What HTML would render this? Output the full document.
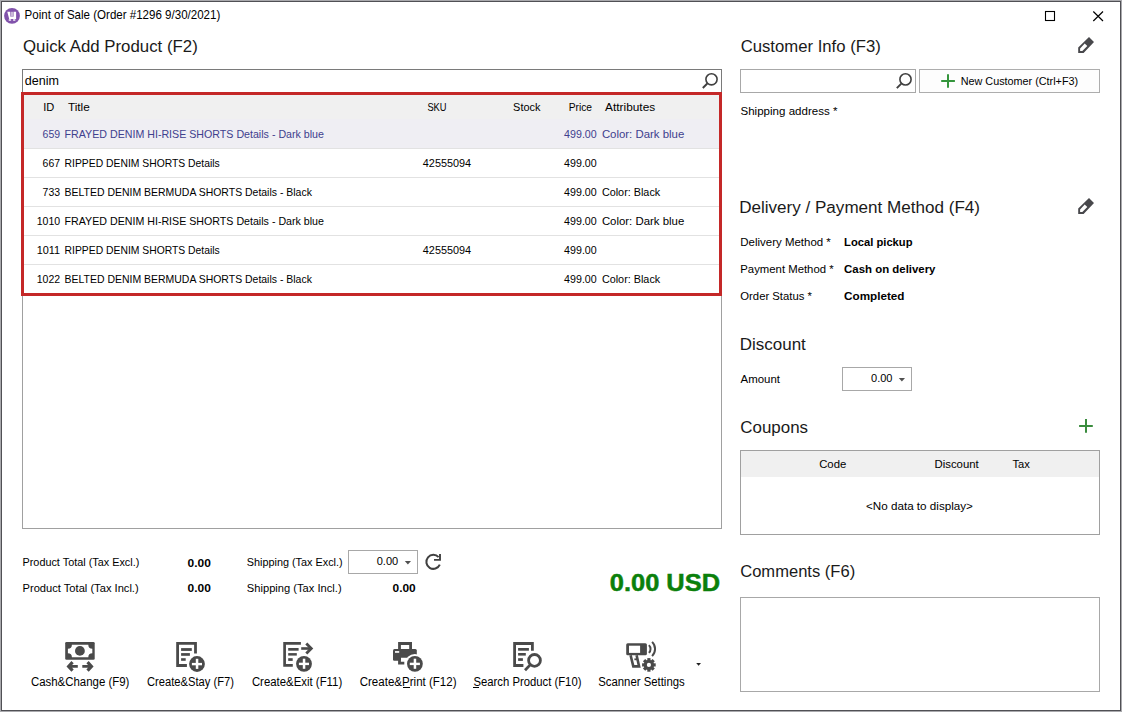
<!DOCTYPE html>
<html><head><meta charset="utf-8"><style>
html,body{margin:0;padding:0;width:1122px;height:712px;overflow:hidden;background:#fff;}
svg text{font-family:"Liberation Sans",sans-serif;white-space:pre;}
.b{position:absolute;box-sizing:border-box;}
</style></head><body>
<div class="b" style="left:0;top:0;width:1122px;height:712px;border:1px solid #a9a9ad"></div>
<div class="b" style="left:1px;top:1px;width:1120px;height:710px;border:1px solid #505055"></div>
<!-- main grid frame -->
<div class="b" style="left:22px;top:92px;width:700px;height:437px;border:1px solid #a0a0a0"></div>
<div class="b" style="left:23px;top:93px;width:698px;height:26px;background:#f0f0f0"></div>
<div class="b" style="left:23px;top:119px;width:698px;height:29px;background:#efeef3"></div>
<div class="b" style="left:23px;top:148px;width:698px;height:1px;background:#e2e2e2"></div>
<div class="b" style="left:23px;top:177px;width:698px;height:1px;background:#e2e2e2"></div>
<div class="b" style="left:23px;top:206px;width:698px;height:1px;background:#e2e2e2"></div>
<div class="b" style="left:23px;top:235px;width:698px;height:1px;background:#e2e2e2"></div>
<div class="b" style="left:23px;top:264px;width:698px;height:1px;background:#e2e2e2"></div>
<!-- search box -->
<div class="b" style="left:22px;top:69px;width:700px;height:24px;border:1px solid #7a7a7a;border-bottom:none"></div>
<!-- red highlight -->
<div class="b" style="left:21px;top:92px;width:701px;height:204px;border:3px solid #c42828"></div>
<!-- customer search -->
<div class="b" style="left:740px;top:69px;width:176px;height:24px;border:1px solid #a8a8a8"></div>
<div class="b" style="left:919px;top:69px;width:181px;height:24px;border:1px solid #adadad;background:#fdfdfd"></div>
<!-- discount spin -->
<div class="b" style="left:842px;top:367px;width:70px;height:24px;border:1px solid #a8a8a8"></div>
<!-- coupons grid -->
<div class="b" style="left:740px;top:450px;width:360px;height:85px;border:1px solid #a0a0a0"></div>
<div class="b" style="left:741px;top:451px;width:358px;height:26px;background:#f0f0f0"></div>
<!-- comments -->
<div class="b" style="left:740px;top:597px;width:360px;height:95px;border:1px solid #a8a8a8"></div>
<!-- shipping spin -->
<div class="b" style="left:348px;top:550px;width:70px;height:24px;border:1px solid #a8a8a8"></div>
<div class="b" style="left:473px;top:687px;width:6px;height:1px;background:#000"></div>
<div class="b" style="left:403px;top:687px;width:7px;height:1px;background:#000"></div>

<svg width="1122" height="712" viewBox="0 0 1122 712" style="position:absolute;left:0;top:0">
<!-- app icon -->
<circle cx="12" cy="15.9" r="7.9" fill="#8152ab"/>
<path d="M7.3 11.8 H9.9 L10.3 16.6 H13.6 V11.8 H16.1 V19 H9.2 Z" fill="#fff"/>
<rect x="10.4" y="11.8" width="3.1" height="4.6" fill="#c8b8d8"/>
<ellipse cx="9.9" cy="20" rx="1.4" ry="0.9" fill="#e6daf0"/>
<ellipse cx="14.2" cy="20" rx="1.4" ry="0.9" fill="#e6daf0"/>
<!-- window buttons -->
<rect x="1045.5" y="11.5" width="9" height="9" fill="none" stroke="#000" stroke-width="1.1"/>
<path d="M1093.3 11.5 L1103 21 M1103 11.5 L1093.3 21" stroke="#000" stroke-width="1.2"/>
<!-- search magnifiers -->
<g fill="none" stroke="#404040">
<circle cx="711.5" cy="79.3" r="5.6" stroke-width="1.6"/>
<path d="M707.3 83.5 L702.8 88" stroke-width="1.9"/>
<circle cx="905.5" cy="79.4" r="5.6" stroke-width="1.6"/>
<path d="M901.3 83.6 L896.8 88.1" stroke-width="1.9"/>
</g>
<!-- green plus -->
<path d="M941.2 81 H954.9 M948 74.3 V87.7" stroke="#34953c" stroke-width="2"/>
<path d="M1079.1 426 H1092.8 M1086 419.1 V432.8" stroke="#3a8c3e" stroke-width="2"/>
<!-- pencils -->
<g id="pen" fill="#48484c">
<path d="M1078.2 53 V47.4 L1089 36.9 L1094 42 L1083.6 53 Z M1080.1 51 H1082.3 L1087.3 46 L1084.7 43.6 L1080.1 48.5 Z" fill-rule="evenodd"/>
</g>
<use href="#pen" transform="translate(0,161)"/>
<!-- spin triangles -->
<path d="M898.8 378 H905 L901.9 381.6 Z" fill="#505050"/>
<path d="M404.8 561 H411 L407.9 564.6 Z" fill="#505050"/>
<!-- refresh -->
<path d="M438.6 557.2 A7 7 0 1 0 439.8 564.6" fill="none" stroke="#404040" stroke-width="2"/>
<path d="M434 559.9 H440 V554" fill="none" stroke="#404040" stroke-width="1.9"/>
<!-- dropdown -->
<path d="M696.2 663 H701 L698.6 665.7 Z" fill="#202020"/>
<g fill="#4a4a4a" stroke="none">
<!-- cash -->
<rect x="65.2" y="641.9" width="29.5" height="17.8" rx="1.3"/>
<path d="M71.9 644.7 H88.3 A4 4 0 0 0 92.3 648.7 V653.3 A4 4 0 0 0 88.3 657.3 H71.9 A4 4 0 0 0 67.9 653.3 V648.7 A4 4 0 0 0 71.9 644.7 Z" fill="#fff"/>
<circle cx="79.9" cy="650.9" r="4.9"/>
<path id="arrL" d="M66.5 666.4 L71.4 661.1 L73.7 663.3 L72.1 665 H77.8 V667.7 H72.1 L73.7 669.6 L71.4 671.8 Z"/>
<use href="#arrL" transform="translate(160.1 0) scale(-1 1)"/>
</g>
<g fill="#4a4a4a">
<!-- create&stay -->
<path d="M195.5 653.4 V643.3 H177.6 V665.5 H186.9" fill="none" stroke="#4a4a4a" stroke-width="2.8"/>
<rect x="181.1" y="648.1" width="10.7" height="2.8"/>
<rect x="181.1" y="653.1" width="8.8" height="2.7"/>
<rect x="181.1" y="658.2" width="4.6" height="2.6"/>
<circle cx="197" cy="664" r="9.6" fill="#fff"/>
<circle cx="197" cy="664" r="7.9"/>
<rect x="191.9" y="662.9" width="10.1" height="2.4" fill="#fff"/>
<rect x="195.8" y="658.8" width="2.5" height="10.1" fill="#fff"/>
<!-- create&exit -->
<path d="M300.9 643.4 H284.6 V665.35 H292.8" fill="none" stroke="#4a4a4a" stroke-width="2.7"/>
<rect x="288.2" y="648" width="10.4" height="2.7"/>
<rect x="288.2" y="653.1" width="8.6" height="2.5"/>
<rect x="288.2" y="658.2" width="4.5" height="2.7"/>
<rect x="301.2" y="647.2" width="8.8" height="2.6"/>
<path d="M306.3 643.4 L311.3 648.5 L306.3 653.6" fill="none" stroke="#4a4a4a" stroke-width="2.8"/>
<circle cx="304" cy="663.8" r="9.6" fill="#fff"/>
<circle cx="304" cy="663.8" r="7.9"/>
<rect x="298.9" y="662.7" width="10.1" height="2.4" fill="#fff"/>
<rect x="302.8" y="658.7" width="2.5" height="10.1" fill="#fff"/>
<!-- create&print -->
<path d="M399.5 649.5 V643.5 H410.6 V649.5" fill="none" stroke="#4a4a4a" stroke-width="2.8"/>
<rect x="393" y="649.1" width="23.8" height="8.6" rx="1.5"/>
<rect x="393" y="652" width="8" height="8.7" rx="1.2"/>
<rect x="395" y="651.1" width="4.2" height="1.7" fill="#fff"/>
<path d="M399.5 658 V663.2 H404.3" fill="none" stroke="#4a4a4a" stroke-width="2.8"/>
<circle cx="414.9" cy="663.8" r="9.8" fill="#fff"/>
<circle cx="414.9" cy="663.8" r="7.9"/>
<rect x="409.8" y="662.7" width="10.1" height="2.4" fill="#fff"/>
<rect x="413.7" y="658.7" width="2.5" height="10.1" fill="#fff"/>
<!-- search product -->
<path d="M532.4 650.7 V643.5 H514.6 V665.5 H523.4" fill="none" stroke="#4a4a4a" stroke-width="2.8"/>
<rect x="518.1" y="648" width="10.8" height="2.7"/>
<rect x="518.1" y="653" width="7.7" height="2.6"/>
<rect x="518.1" y="658.2" width="4.8" height="2.7"/>
<circle cx="534.5" cy="660.4" r="8.6" fill="#fff"/>
<path d="M526.3 668.6 L521.5 673.4" stroke="#fff" stroke-width="5"/>
<circle cx="534.5" cy="660.4" r="5.9" fill="none" stroke="#4a4a4a" stroke-width="2.8"/>
<path d="M530.2 664.9 L525 670.3" stroke="#4a4a4a" stroke-width="2.8"/>
<!-- scanner -->
<rect x="626.2" y="643.3" width="20.7" height="12" rx="1.5"/>
<rect x="629" y="645.7" width="11.1" height="7.2" fill="#fff"/>
<path d="M630.6 655.3 L633.3 666.4 H639.1 L636.6 655.3" fill="none" stroke="#4a4a4a" stroke-width="2.6"/>
<rect x="634.4" y="658.4" width="2.6" height="1.8"/>
<path d="M648.9 645.1 A5.5 5.5 0 0 1 648.9 652.9 M652.1 641.9 A10 10 0 0 1 652.1 656.1" fill="none" stroke="#4a4a4a" stroke-width="2"/>
<g transform="translate(648.9 664.9)">
<circle r="5.2"/>
<rect x="-1.6" y="-6.8" width="3.2" height="13.6"/>
<rect x="-1.6" y="-6.8" width="3.2" height="13.6" transform="rotate(45)"/>
<rect x="-1.6" y="-6.8" width="3.2" height="13.6" transform="rotate(90)"/>
<rect x="-1.6" y="-6.8" width="3.2" height="13.6" transform="rotate(135)"/>
<circle r="2.1" fill="#fff"/>
</g>
</g>
</svg>

<svg width="1122" height="712" viewBox="0 0 1122 712" style="position:absolute;left:0;top:0"><text x="24.56" y="18.70" font-size="12.355" font-weight="400" fill="#000" textLength="195.74" lengthAdjust="spacingAndGlyphs">Point of Sale (Order #1296 9/30/2021)</text><text x="23.00" y="52.20" font-size="17.297" font-weight="400" fill="#1a1a1a" textLength="174.73" lengthAdjust="spacingAndGlyphs">Quick Add Product (F2)</text><text x="740.70" y="51.90" font-size="16.424" font-weight="400" fill="#1a1a1a" textLength="140.07" lengthAdjust="spacingAndGlyphs">Customer Info (F3)</text><text x="739.16" y="212.90" font-size="16.424" font-weight="400" fill="#1a1a1a" textLength="240.82" lengthAdjust="spacingAndGlyphs">Delivery / Payment Method (F4)</text><text x="739.66" y="350.00" font-size="16.424" font-weight="400" fill="#1a1a1a" textLength="66.18" lengthAdjust="spacingAndGlyphs">Discount</text><text x="740.30" y="433.40" font-size="16.424" font-weight="400" fill="#1a1a1a" textLength="67.81" lengthAdjust="spacingAndGlyphs">Coupons</text><text x="740.20" y="577.40" font-size="16.424" font-weight="400" fill="#1a1a1a" textLength="114.97" lengthAdjust="spacingAndGlyphs">Comments (F6)</text><text x="24.80" y="85.00" font-size="12.791" font-weight="400" fill="#000" textLength="34.13" lengthAdjust="spacingAndGlyphs">denim</text><text x="43.30" y="110.50" font-size="11.047" font-weight="400" fill="#000" textLength="11.07" lengthAdjust="spacingAndGlyphs">ID</text><text x="67.90" y="110.50" font-size="11.047" font-weight="400" fill="#000" textLength="21.84" lengthAdjust="spacingAndGlyphs">Title</text><text x="427.40" y="110.50" font-size="11.047" font-weight="400" fill="#000" textLength="19.17" lengthAdjust="spacingAndGlyphs">SKU</text><text x="513.10" y="110.50" font-size="11.047" font-weight="400" fill="#000" textLength="27.32" lengthAdjust="spacingAndGlyphs">Stock</text><text x="568.70" y="110.50" font-size="11.047" font-weight="400" fill="#000" textLength="23.33" lengthAdjust="spacingAndGlyphs">Price</text><text x="605.10" y="110.50" font-size="11.047" font-weight="400" fill="#000" textLength="50.08" lengthAdjust="spacingAndGlyphs">Attributes</text><text x="42.60" y="137.60" font-size="11.337" font-weight="400" fill="#40408e" textLength="17.48" lengthAdjust="spacingAndGlyphs">659</text><text x="64.60" y="137.60" font-size="11.337" font-weight="400" fill="#40408e" textLength="259.38" lengthAdjust="spacingAndGlyphs">FRAYED DENIM HI-RISE SHORTS Details - Dark blue</text><text x="564.10" y="137.60" font-size="11.047" font-weight="400" fill="#40408e" textLength="32.63" lengthAdjust="spacingAndGlyphs">499.00</text><text x="601.90" y="137.60" font-size="11.047" font-weight="400" fill="#40408e" textLength="82.34" lengthAdjust="spacingAndGlyphs">Color: Dark blue</text><text x="42.60" y="166.60" font-size="11.337" font-weight="400" fill="#000" textLength="17.48" lengthAdjust="spacingAndGlyphs">667</text><text x="64.60" y="166.60" font-size="11.337" font-weight="400" fill="#000" textLength="155.19" lengthAdjust="spacingAndGlyphs">RIPPED DENIM SHORTS Details</text><text x="422.80" y="166.60" font-size="11.047" font-weight="400" fill="#000" textLength="48.33" lengthAdjust="spacingAndGlyphs">42555094</text><text x="564.10" y="166.60" font-size="11.047" font-weight="400" fill="#000" textLength="32.63" lengthAdjust="spacingAndGlyphs">499.00</text><text x="42.60" y="195.60" font-size="11.337" font-weight="400" fill="#000" textLength="17.48" lengthAdjust="spacingAndGlyphs">733</text><text x="64.60" y="195.60" font-size="11.337" font-weight="400" fill="#000" textLength="247.29" lengthAdjust="spacingAndGlyphs">BELTED DENIM BERMUDA SHORTS Details - Black</text><text x="564.10" y="195.60" font-size="11.047" font-weight="400" fill="#000" textLength="32.63" lengthAdjust="spacingAndGlyphs">499.00</text><text x="601.90" y="195.60" font-size="11.047" font-weight="400" fill="#000" textLength="58.32" lengthAdjust="spacingAndGlyphs">Color: Black</text><text x="36.70" y="224.60" font-size="11.337" font-weight="400" fill="#000" textLength="23.38" lengthAdjust="spacingAndGlyphs">1010</text><text x="64.60" y="224.60" font-size="11.337" font-weight="400" fill="#000" textLength="259.38" lengthAdjust="spacingAndGlyphs">FRAYED DENIM HI-RISE SHORTS Details - Dark blue</text><text x="564.10" y="224.60" font-size="11.047" font-weight="400" fill="#000" textLength="32.63" lengthAdjust="spacingAndGlyphs">499.00</text><text x="601.90" y="224.60" font-size="11.047" font-weight="400" fill="#000" textLength="82.34" lengthAdjust="spacingAndGlyphs">Color: Dark blue</text><text x="36.70" y="253.60" font-size="11.337" font-weight="400" fill="#000" textLength="23.39" lengthAdjust="spacingAndGlyphs">1011</text><text x="64.60" y="253.60" font-size="11.337" font-weight="400" fill="#000" textLength="155.19" lengthAdjust="spacingAndGlyphs">RIPPED DENIM SHORTS Details</text><text x="422.80" y="253.60" font-size="11.047" font-weight="400" fill="#000" textLength="48.33" lengthAdjust="spacingAndGlyphs">42555094</text><text x="564.10" y="253.60" font-size="11.047" font-weight="400" fill="#000" textLength="32.63" lengthAdjust="spacingAndGlyphs">499.00</text><text x="36.70" y="282.60" font-size="11.337" font-weight="400" fill="#000" textLength="23.38" lengthAdjust="spacingAndGlyphs">1022</text><text x="64.60" y="282.60" font-size="11.337" font-weight="400" fill="#000" textLength="247.29" lengthAdjust="spacingAndGlyphs">BELTED DENIM BERMUDA SHORTS Details - Black</text><text x="564.10" y="282.60" font-size="11.047" font-weight="400" fill="#000" textLength="32.63" lengthAdjust="spacingAndGlyphs">499.00</text><text x="601.90" y="282.60" font-size="11.047" font-weight="400" fill="#000" textLength="58.32" lengthAdjust="spacingAndGlyphs">Color: Black</text><text x="960.70" y="85.10" font-size="11.337" font-weight="400" fill="#000" textLength="117.48" lengthAdjust="spacingAndGlyphs">New Customer (Ctrl+F3)</text><text x="740.50" y="114.70" font-size="11.337" font-weight="400" fill="#000" textLength="96.90" lengthAdjust="spacingAndGlyphs">Shipping address *</text><text x="740.30" y="246.20" font-size="11.337" font-weight="400" fill="#000" textLength="90.50" lengthAdjust="spacingAndGlyphs">Delivery Method *</text><text x="844.10" y="246.20" font-size="11.337" font-weight="700" fill="#000" textLength="68.42" lengthAdjust="spacingAndGlyphs">Local pickup</text><text x="740.30" y="273.10" font-size="11.337" font-weight="400" fill="#000" textLength="93.31" lengthAdjust="spacingAndGlyphs">Payment Method *</text><text x="844.10" y="273.10" font-size="11.337" font-weight="700" fill="#000" textLength="91.39" lengthAdjust="spacingAndGlyphs">Cash on delivery</text><text x="740.30" y="299.80" font-size="11.337" font-weight="400" fill="#000" textLength="71.61" lengthAdjust="spacingAndGlyphs">Order Status *</text><text x="844.10" y="299.80" font-size="11.337" font-weight="700" fill="#000" textLength="60.42" lengthAdjust="spacingAndGlyphs">Completed</text><text x="740.50" y="382.90" font-size="11.337" font-weight="400" fill="#000" textLength="39.44" lengthAdjust="spacingAndGlyphs">Amount</text><text x="871.00" y="381.90" font-size="11.337" font-weight="400" fill="#000" textLength="21.49" lengthAdjust="spacingAndGlyphs">0.00</text><text x="819.20" y="467.50" font-size="11.337" font-weight="400" fill="#000" textLength="27.10" lengthAdjust="spacingAndGlyphs">Code</text><text x="934.50" y="467.50" font-size="11.337" font-weight="400" fill="#000" textLength="44.24" lengthAdjust="spacingAndGlyphs">Discount</text><text x="1012.40" y="467.50" font-size="11.337" font-weight="400" fill="#000" textLength="17.37" lengthAdjust="spacingAndGlyphs">Tax</text><text x="866.00" y="509.60" font-size="11.337" font-weight="400" fill="#000" textLength="106.90" lengthAdjust="spacingAndGlyphs">&lt;No data to display&gt;</text><text x="22.50" y="566.40" font-size="11.337" font-weight="400" fill="#000" textLength="116.78" lengthAdjust="spacingAndGlyphs">Product Total (Tax Excl.)</text><text x="187.50" y="566.60" font-size="11.337" font-weight="700" fill="#000" textLength="23.32" lengthAdjust="spacingAndGlyphs">0.00</text><text x="22.50" y="592.00" font-size="11.337" font-weight="400" fill="#000" textLength="116.18" lengthAdjust="spacingAndGlyphs">Product Total (Tax Incl.)</text><text x="187.50" y="592.40" font-size="11.337" font-weight="700" fill="#000" textLength="23.32" lengthAdjust="spacingAndGlyphs">0.00</text><text x="246.80" y="565.90" font-size="11.337" font-weight="400" fill="#000" textLength="95.78" lengthAdjust="spacingAndGlyphs">Shipping (Tax Excl.)</text><text x="376.70" y="564.90" font-size="11.337" font-weight="400" fill="#000" textLength="21.49" lengthAdjust="spacingAndGlyphs">0.00</text><text x="246.80" y="592.00" font-size="11.337" font-weight="400" fill="#000" textLength="94.88" lengthAdjust="spacingAndGlyphs">Shipping (Tax Incl.)</text><text x="392.50" y="592.30" font-size="11.337" font-weight="700" fill="#000" textLength="23.22" lengthAdjust="spacingAndGlyphs">0.00</text><text x="609.80" y="591.10" font-size="24.419" font-weight="700" fill="#0b800b" textLength="110.25" lengthAdjust="spacingAndGlyphs" stroke="#0b800b" stroke-width="0.5">0.00 USD</text><text x="30.90" y="685.80" font-size="12.500" font-weight="400" fill="#000" textLength="98.55" lengthAdjust="spacingAndGlyphs">Cash&amp;Change (F9)</text><text x="147.00" y="685.80" font-size="12.500" font-weight="400" fill="#000" textLength="86.95" lengthAdjust="spacingAndGlyphs">Create&amp;Stay (F7)</text><text x="251.90" y="685.80" font-size="12.500" font-weight="400" fill="#000" textLength="90.35" lengthAdjust="spacingAndGlyphs">Create&amp;Exit (F11)</text><text x="359.70" y="685.80" font-size="12.500" font-weight="400" fill="#000" textLength="96.85" lengthAdjust="spacingAndGlyphs">Create&amp;Print (F12)</text><text x="473.50" y="685.80" font-size="12.500" font-weight="400" fill="#000" textLength="107.95" lengthAdjust="spacingAndGlyphs">Search Product (F10)</text><text x="598.20" y="685.80" font-size="12.500" font-weight="400" fill="#000" textLength="86.53" lengthAdjust="spacingAndGlyphs">Scanner Settings</text></svg>
</body></html>
